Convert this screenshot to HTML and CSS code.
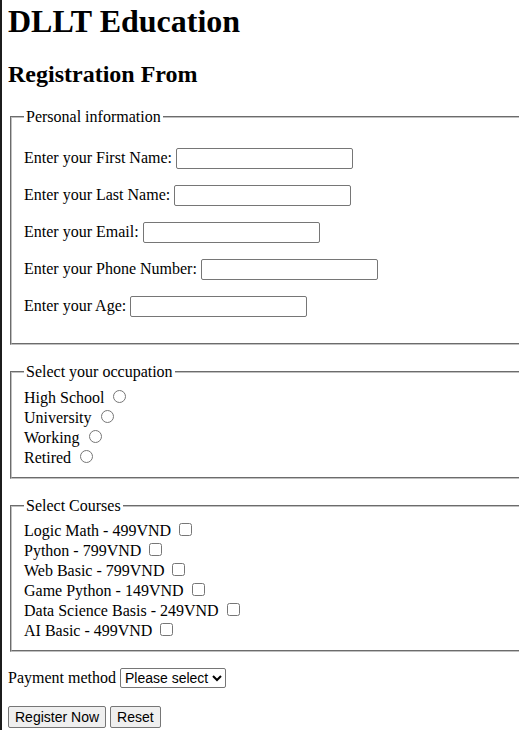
FILE: index.html
```html
<!DOCTYPE html>
<html lang="en">
<head>
<meta charset="utf-8">
<title>DLLT Education</title>
<link rel="stylesheet" href="styles.css">
</head>
<body>
<h1 class="title">DLLT Education</h1>
<h2 class="subtitle">Registration From</h2>
<form class="form">
  <fieldset class="group">
    <legend class="legend">Personal information</legend>
    <p class="row">Enter your First Name: <input class="field" type="text"></p>
    <p class="row">Enter your Last Name: <input class="field" type="text"></p>
    <p class="row">Enter your Email: <input class="field" type="text"></p>
    <p class="row">Enter your Phone Number: <input class="field" type="text"></p>
    <p class="row">Enter your Age: <input class="field" type="text"></p>
  </fieldset>
  <br>
  <fieldset class="group">
    <legend class="legend">Select your occupation</legend>
    <label class="opt">High School <input class="radio" type="radio" name="occ"></label><br>
    <label class="opt">University <input class="radio" type="radio" name="occ"></label><br>
    <label class="opt">Working <input class="radio" type="radio" name="occ"></label><br>
    <label class="opt">Retired <input class="radio" type="radio" name="occ"></label>
  </fieldset>
  <br>
  <fieldset class="group">
    <legend class="legend">Select Courses</legend>
    <label class="opt">Logic Math - 499VND <input class="check" type="checkbox"></label><br>
    <label class="opt">Python - 799VND <input class="check" type="checkbox"></label><br>
    <label class="opt">Web Basic - 799VND <input class="check" type="checkbox"></label><br>
    <label class="opt">Game Python - 149VND <input class="check" type="checkbox"></label><br>
    <label class="opt">Data Science Basis - 249VND <input class="check" type="checkbox"></label><br>
    <label class="opt">AI Basic - 499VND <input class="check" type="checkbox"></label>
  </fieldset>
  <p class="row">Payment method <select class="select"><option>Please select</option><option>Cash</option><option>Bank transfer</option></select></p>
  <p class="row row-btns"><button class="btn" type="submit">Register Now</button> <button class="btn" type="reset">Reset</button></p>
</form>
</body>
</html>
```
FILE: styles.css
```css
html {
  overflow: hidden;
  background: linear-gradient(to right, #1c1c1c 0, #1c1c1c 2px, #ffffff 2px);
}
body {
  margin: 0 8px 8px 8px;
  font-family: "Liberation Serif", "Times New Roman", serif;
  font-size: 16px;
  color: #000;
}
.title {
  font-size: 32px;
  font-weight: bold;
  margin: 3px 0 21.44px 0;
}
.subtitle {
  font-size: 24px;
  font-weight: bold;
  margin: 19.92px 0;
}
.group {
  margin: 0 -8px 0 2px;
  padding: 5.6px 12px 10px 12px;
  border: 2px groove #c0c0c0;
  border-right-width: 0;
  min-width: 0;
}
.legend {
  padding: 0 2px;
}
.row {
  margin: 16px 0;
}
.row-btns {
  margin-top: 18px;
}
.field {
  box-sizing: border-box;
  width: 177px;
  height: 21px;
  padding: 1px 2px;
  border: 1px solid #767676;
  border-radius: 2px;
  font-family: "Liberation Sans", Arial, sans-serif;
  font-size: 13.333px;
  vertical-align: baseline;
}
.radio {
  margin: 3px 3px 0 5px;
}
.check {
  margin: 3px 3px 3px 4px;
}
.select {
  box-sizing: border-box;
  height: 20px;
  font-family: "Liberation Sans", Arial, sans-serif;
  font-size: 14px;
  border: 1px solid #767676;
  border-radius: 2px;
  background: #fff;
  color: #000;
}
.btn {
  box-sizing: border-box;
  height: 22px;
  font-family: "Liberation Sans", Arial, sans-serif;
  font-size: 14px;
  padding: 1px 6px;
  border: 1px solid #767676;
  border-radius: 2px;
  background: #efefef;
  color: #000;
}
```
